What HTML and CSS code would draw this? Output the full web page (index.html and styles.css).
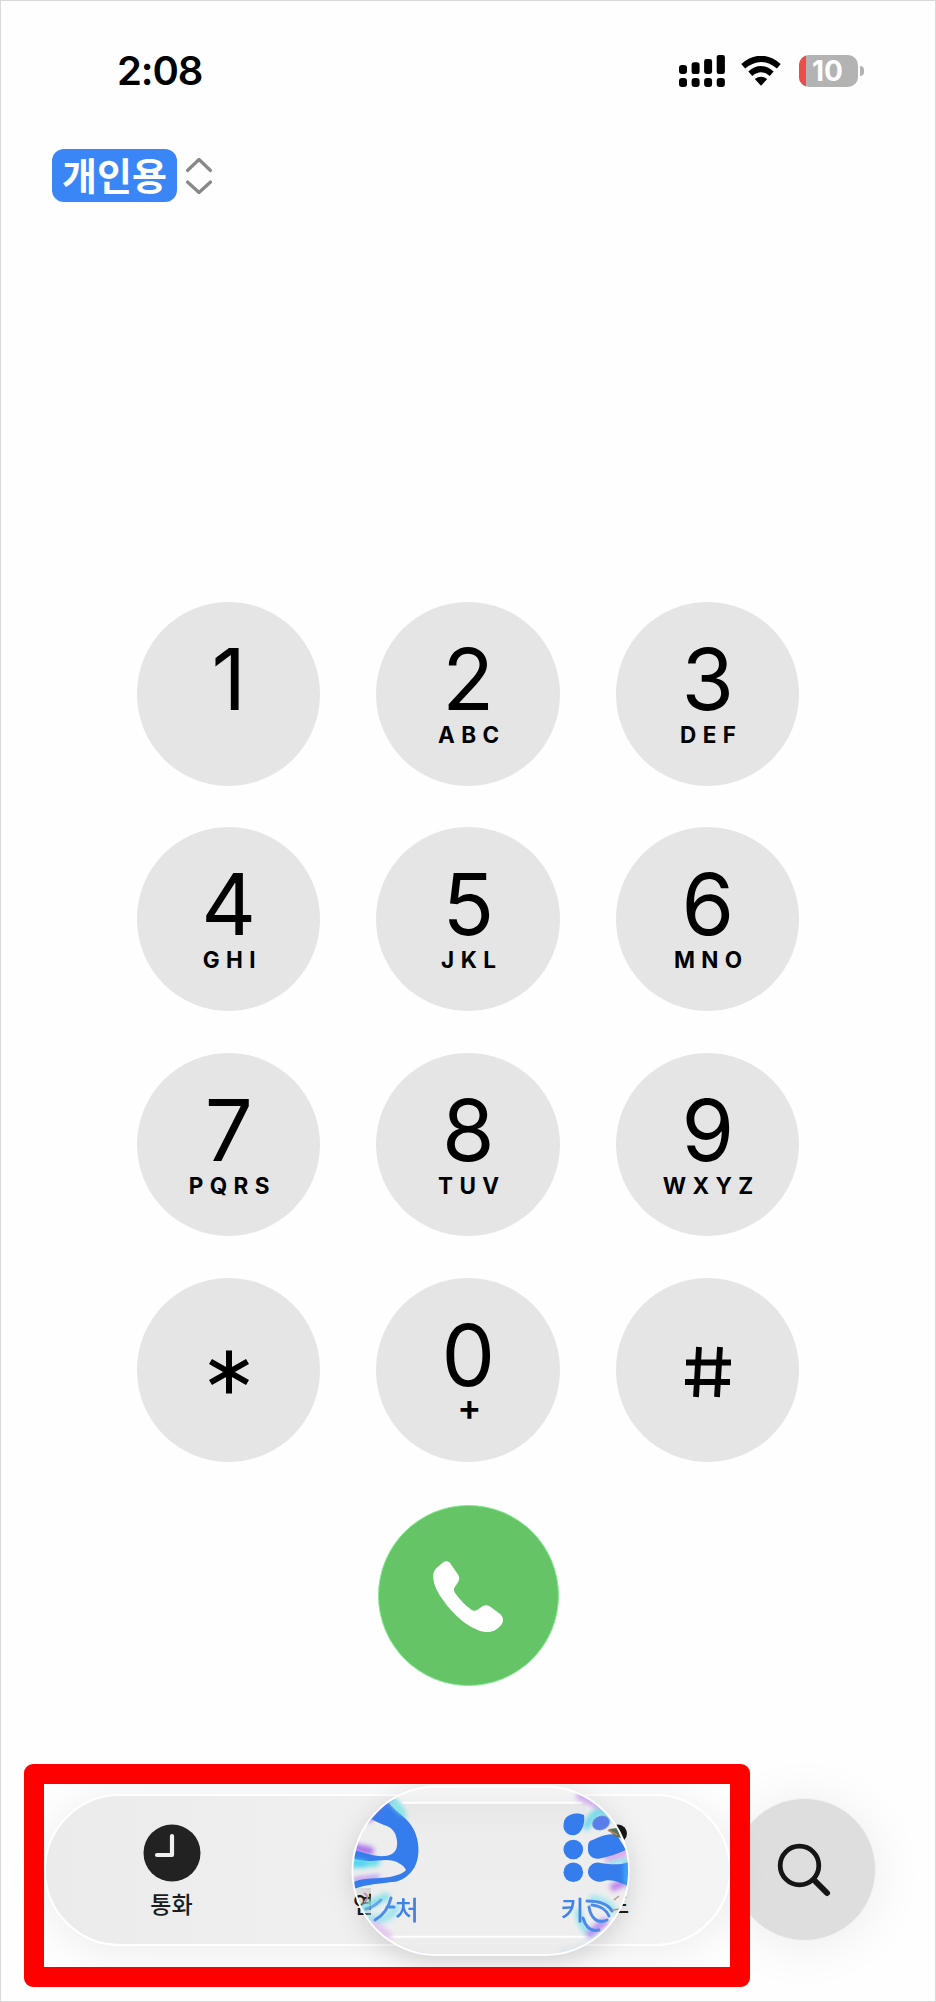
FILE: index.html
```
<!DOCTYPE html>
<html lang="ko">
<head>
<meta charset="utf-8">
<title>키패드</title>
<link rel="stylesheet" href="styles.css">
</head>
<body>
<div class="phone">
  <header class="status">
    <span class="time">2:08</span>
    <div class="indicators">
      <svg class="signal" width="46" height="32" viewBox="0 0 46 32">
        <rect x="0" y="10" width="8" height="9" rx="3"/><rect x="12.6" y="7.3" width="8" height="11.7" rx="2.6"/><rect x="25.1" y="4" width="8" height="15" rx="2.4"/><rect x="37.7" y="0" width="8.2" height="19" rx="2.2"/>
        <rect x="0" y="23" width="8" height="9" rx="3"/><rect x="12.6" y="23" width="8" height="9" rx="3"/><rect x="25.1" y="23" width="8" height="9" rx="3"/><rect x="37.7" y="23" width="8.2" height="9" rx="3"/>
      </svg>
      <svg class="wifi" width="40" height="30" viewBox="0 0 40 30">
        <path d="M2.2 10.200Q20-4.600 37.800 10.200" fill="none" stroke="#000" stroke-width="6"/>
        <path d="M9.300 17.800Q20 8.600 30.700 17.800" fill="none" stroke="#000" stroke-width="6"/>
        <path d="M13.800 23Q20 18.400 26.200 23L20 29.800Z"/>
      </svg>
      <div class="battery"><span class="level"></span><span class="percent">10</span></div>
      <span class="nub"></span>
    </div>
  </header>

  <div class="line">
    <span class="badge">개인용</span>
    <svg width="28" height="40" viewBox="0 0 28 40" fill="none" stroke="#888" stroke-width="3.2" stroke-linecap="round" stroke-linejoin="round">
      <path d="M2.500 14.500 14 3.500 25.500 14.500M2.500 26 14 36.500 25.500 26"/>
    </svg>
  </div>

  <main class="keypad">
    <div class="key"><b>1</b></div>
    <div class="key"><b>2</b><i>ABC</i></div>
    <div class="key"><b>3</b><i>DEF</i></div>
    <div class="key"><b>4</b><i>GHI</i></div>
    <div class="key"><b>5</b><i>JKL</i></div>
    <div class="key"><b>6</b><i>MNO</i></div>
    <div class="key"><b>7</b><i>PQRS</i></div>
    <div class="key"><b>8</b><i>TUV</i></div>
    <div class="key"><b>9</b><i>WXYZ</i></div>
    <div class="key symbol">
      <svg width="42" height="46" viewBox="0 0 42 46" stroke="#000" stroke-width="6"><path d="M21 1.500V44.500M2.500 12.500 39.500 33.500M39.500 12.500 2.500 33.500"/></svg>
    </div>
    <div class="key"><b>0</b><i class="plus">+</i></div>
    <div class="key symbol">
      <svg width="50" height="54" viewBox="0 0 50 54" fill="none" stroke="#000" stroke-width="5.800"><path d="M16 2 13 52M37 2 34 52M3 17.500H48M2 37H47"/></svg>
    </div>
  </main>

  <div class="call">
    <svg width="70" height="72" viewBox="0 0 70 72"><path fill="#fff" d="M6 5C9 1.500 12 0 14 .3C16 .5 17 2 18 3.500L25 13.500C27 16.500 26.500 19 24.500 22L21.500 26.500C20.500 28.500 21 30.500 22.500 32.500C27 39 32 44 38.500 48.800C40.500 50.300 42.500 50 44.500 48.800L49.500 45.300C52 43.800 54.500 44 57 45.600L66.500 52.500C70.500 55.500 71 60 68.500 63.500C64 69.500 58 72 51 70.800C36 68 21 54 11.500 41C4 31 .3 23.500 .2 15C.2 11 2 7.500 6 5Z"/></svg>
  </div>

  <footer class="bottom">
    <nav class="tabs">
      <div class="tab">
        <svg width="58" height="58" viewBox="0 0 58 58"><circle cx="29" cy="29" r="28.500" fill="#222"/><path d="M29 12V31H14" fill="none" stroke="#f0f0f0" stroke-width="4.200" stroke-linecap="round" stroke-linejoin="round"/></svg>
        <span>통화</span>
      </div>
      <div class="tab contacts">
        <span>연</span>
      </div>
      <div class="tab dial">
        <svg width="58" height="58" viewBox="0 0 58 58" fill="#181818"><circle cx="28" cy="9.500" r="9"/></svg>
        <span>드</span>
      </div>

      <svg class="lens" width="281" height="174" viewBox="350 1784 281 174">
        <defs>
          <clipPath id="glass"><rect x="352" y="1786" width="277.500" height="169.500" rx="85"/></clipPath>
          <linearGradient id="face" x1="0" y1="0" x2="0" y2="1"><stop offset="0" stop-color="#f5f5f5"/><stop offset=".12" stop-color="#eee"/><stop offset=".5" stop-color="#ededed"/><stop offset=".85" stop-color="#eee"/><stop offset="1" stop-color="#ebebeb"/></linearGradient>
          <linearGradient id="inner" x1="0" y1="0" x2="0" y2="1"><stop offset="0" stop-color="#e7e7e7"/><stop offset=".25" stop-color="#ededed"/><stop offset="1" stop-color="#eee"/></linearGradient>
          <filter id="soft" x="-50%" y="-50%" width="200%" height="200%"><feGaussianBlur stdDeviation="2.600"/></filter>
          <filter id="fine" x="-20%" y="-20%" width="140%" height="140%"><feGaussianBlur stdDeviation=".7"/></filter>
        </defs>
        <g clip-path="url(#glass)">
          <path d="M352 1786H630V1956H352V1916H371V1888H352Z" fill="url(#face)"/>
          <rect x="402" y="1803" width="184" height="133" fill="url(#inner)"/>
          <path d="M402 1802.800H582M385 1936.800H590" stroke="#fff" stroke-width="2"/>

          <g filter="url(#soft)" fill="none" stroke-width="8" stroke-linecap="round">
            <path d="M390 1798C398 1808 401 1812 402 1818" stroke="#7ee0e6"/>
            <path d="M368 1818 388 1799" stroke="#a66be8"/>
            <path d="M352 1847 370 1851" stroke="#a970ec"/>
            <path d="M354 1864 376 1862" stroke="#62dceb"/>
            <path d="M354 1880 378 1877" stroke="#b58af0" stroke-width="4"/>
            <path d="M364 1908C374 1902 378 1900 386 1897" stroke="#8ce2ea"/>
            <path d="M370 1918C384 1922 390 1916 396 1908" stroke="#a0e3ef"/>
            <path d="M374 1924 388 1936" stroke="#e3c4f0"/>
            <path d="M580 1796 604 1808" stroke="#cfa8ee"/>
            <path d="M587 1826C592 1812 602 1808 614 1817" stroke="#72d9e8"/>
            <path d="M608 1858 626 1852" stroke="#e3a4ee"/>
            <path d="M610 1863 626 1860" stroke="#8be6ee" stroke-width="5"/>
            <path d="M614 1887 628 1880" stroke="#bd83ee"/>
            <path d="M578 1912C580 1926 586 1932 594 1936" stroke="#8de3ea" stroke-width="6"/>
            <path d="M590 1934 604 1922" stroke="#b991f0"/>
            <path d="M592 1898C602 1900 612 1904 614 1912" stroke="#9de5ee" stroke-width="6"/>
          </g>

          <g fill="#347cec" filter="url(#fine)">
            <path d="M371 1819 388 1802C397 1813 408 1818 414 1830C419 1840 420 1854 416 1864C412 1874 402 1882 392 1882C376 1884 362 1885 352 1890V1883C362 1877 378 1879 390 1877C398 1875 404 1873 406 1870C404 1865 396 1860 386 1860C374 1861 362 1862 352 1858V1850C364 1852 374 1857 385 1856C394 1855 398 1850 397 1841C396 1830 390 1827 384 1825C379 1823 375 1821 371 1819Z"/>
            <circle cx="573.300" cy="1849.500" r="9.800"/>
            <circle cx="573.300" cy="1872.300" r="9.800"/>
            <path d="M565 1819C570 1812 580 1813 584 1815C585 1822 583 1829 579 1833C571 1839 563 1832 563.500 1826C563.600 1823 564 1821 565 1819Z"/>
            <path d="M590 1841C598 1838 607 1832 617 1835L626 1850C617 1854 608 1857 600 1858.500C593 1860 588 1855 588 1850C588 1845 588 1843 590 1841Z"/>
            <path d="M598 1862.500C608 1864 618 1866 630 1862V1886C619 1883 612 1878 602 1881.500C594 1883 588 1877 588 1872C588 1867 592 1862.500 598 1862.500Z"/>
          </g>
          <g filter="url(#soft)" fill="none" stroke-linecap="round" stroke-width="5">
            <path d="M370 1815 384 1802" stroke="#8f6cf0"/>
            <path d="M393 1803 402 1812" stroke="#8fe6ea"/>
            <path d="M352 1862 364 1863" stroke="#49d2f0"/>
            <path d="M627 1864V1882" stroke="#3fb4f5"/>
          </g>
          <ellipse cx="601" cy="1823" rx="9" ry="7" fill="#5a7ee8" filter="url(#fine)" transform="rotate(-20 601 1823)"/>
          <path d="M609 1829 617 1828 621 1838 614 1836Z" fill="#54765a" filter="url(#fine)"/>
          <path d="M608 1830 617 1835" stroke="#b5835f" stroke-width="2" filter="url(#fine)"/>

          <g fill="none" stroke="#4b8ae9" stroke-width="3" stroke-linecap="round" filter="url(#fine)">
            <path d="M391 1898C388 1910 382 1916 375 1920M387 1907H394"/>
            <path d="M366 1909C371 1908 376 1905 381 1900" opacity=".7"/>
            <path d="M587 1901C600 1901 608 1904 612 1911"/>
            <path d="M589 1907C591 1919 598 1924 607 1920"/>
            <path d="M592 1905C602 1906 606 1910 609 1916"/>
            <path d="M583 1918C586 1928 592 1932 599 1930"/>
          </g>
          <g fill="none" stroke-width="1.500" filter="url(#fine)">
            <path d="M364 1893C369 1896 368 1900 364 1902" stroke="#c587b5"/>
            <path d="M614 1900 619 1896M612 1910 621 1909" stroke="#b99888"/>
          </g>
          <text class="lens-label" x="395" y="1919.500">처</text>
          <text class="lens-label" x="560.500" y="1919.500">키</text>
          <path d="M380 1939Q395 1953 425 1954" stroke="#eadff0" stroke-width="4" fill="none" filter="url(#fine)"/>
          <path d="M560 1951Q588 1948 604 1935" stroke="#dde6ec" stroke-width="6" fill="none" filter="url(#soft)"/>
        </g>
        <rect x="352.500" y="1786.500" width="276.500" height="168.500" rx="84" fill="none" stroke="#fff" stroke-width="1.800"/>
      </svg>
    </nav>
    <div class="search">
      <svg width="56" height="56" viewBox="0 0 56 56" fill="none" stroke="#151515"><circle cx="23.500" cy="23.500" r="19.300" stroke-width="4.800"/><path d="M38 38 51 51" stroke-width="6" stroke-linecap="round"/></svg>
    </div>
    <div class="highlight"></div>
  </footer>
</div>
</body>
</html>
```
FILE: styles.css
```
* { box-sizing: border-box; }
body {
  margin: 0;
  background: #fefefe;
  font-family: Inter, "Noto Sans CJK KR", sans-serif;
  color: #000;
}
.phone {
  width: 936px;
  height: 2002px;
  border: 1px solid #d9d9db;
  display: flex;
  flex-direction: column;
  overflow: hidden;
}
.status {
  height: 140px;
  padding: 0 71px 0 116px;
  display: flex;
  justify-content: space-between;
  align-items: center;
}
.time { font-size: 40px; font-weight: 600; line-height: 48px; letter-spacing: -1.1px; }
.indicators { display: flex; align-items: center; }
.wifi { margin-left: 16px; }
.battery {
  width: 59px;
  height: 32px;
  margin-left: 18px;
  border-radius: 10px;
  background: #b3b3b3;
  overflow: hidden;
  display: flex;
  align-items: center;
}
.level { width: 7px; height: 32px; background: #eb4e4a; }
.percent {
  margin-left: 6px;
  color: #fff;
  font-size: 28px;
  font-weight: 700;
  line-height: 32px;
}
.nub {
  width: 4px;
  height: 10px;
  margin-left: 2px;
  border-radius: 0 5px 5px 0;
  background: #b3b3b3;
}
.line {
  height: 72px;
  padding: 8px 0 0 51px;
  display: flex;
  align-items: flex-start;
  gap: 8px;
}
.line svg { margin-top: 7px; }
.badge {
  width: 125px;
  height: 53px;
  border-radius: 12px;
  background: #3b86f7;
  color: #fff;
  font: 700 38px/49px "Noto Sans CJK KR", sans-serif;
  text-align: center;
}
.keypad {
  margin: 389px 0 0 135.500px;
  display: grid;
  grid-template-columns: repeat(3, 183.500px);
  grid-auto-rows: 183.500px;
  gap: 41.900px 56px;
}
.key {
  border-radius: 50%;
  background: #e5e5e5;
  display: flex;
  flex-direction: column;
  align-items: center;
  padding: 36px 0 0 1px;
}
.key b { font-size: 85px; font-weight: 400; line-height: 84px; }
.key i {
  margin: 1px 0 0 5px;
  font-size: 22.500px;
  font-style: normal;
  font-weight: 700;
  letter-spacing: 6.400px;
  line-height: 24px;
  text-indent: 2px;
}
.key .plus {
  margin: -1px 0 0 0;
  font-size: 36px;
  font-weight: 600;
  letter-spacing: 0;
  line-height: 20px;
}
.key.symbol { padding-top: 4px; justify-content: center; }
.call {
  width: 181px;
  height: 181px;
  margin: 43px 0 0 377px;
  padding: 4px 1px 0 0;
  border-radius: 50%;
  border: 1.500px solid #83ea90;
  background: #64c466;
  display: flex;
  align-items: center;
  justify-content: center;
}
.bottom {
  position: relative;
  margin-top: 108px;
  padding-left: 43px;
  display: flex;
  align-items: center;
  gap: 2px;
}
.tabs {
  position: relative;
  width: 687px;
  height: 152px;
  padding: 28px 26px 0 19px;
  border: 2px solid #fff;
  border-radius: 76px;
  background: linear-gradient(90deg, #ebebeb, #f0f0f0 45%, #f4f4f4);
  box-shadow: 0 6px 44px rgba(0, 0, 0, .075);
  display: grid;
  grid-template-columns: repeat(3, 213px);
}
.tab {
  display: flex;
  flex-direction: column;
  align-items: center;
}
.tab span {
  margin-top: 5px;
  color: #1c1c1c;
  font: 500 23px/32px "Noto Sans CJK KR", sans-serif;
}
.contacts { padding: 58px 42px 0 0; }
.dial { padding-left: 42px; }
.lens {
  position: absolute;
  left: 304px;
  top: -12px;
  filter: drop-shadow(0 7px 13px rgba(0, 0, 0, .14));
}
.lens-label {
  fill: #3f82ea;
  font: 500 26px "Noto Sans CJK KR", sans-serif;
}
.search {
  width: 143px;
  height: 143px;
  padding: 1px 1px 0 0;
  border-radius: 50%;
  border: 1px solid #f4f4f4;
  background: #dedede;
  box-shadow: 0 4px 54px rgba(0, 0, 0, .075);
  display: flex;
  align-items: center;
  justify-content: center;
}
.highlight {
  position: absolute;
  left: 23px;
  top: -30px;
  width: 726px;
  height: 223px;
  border: 20px solid #f00;
  border-radius: 9px;
}
```
